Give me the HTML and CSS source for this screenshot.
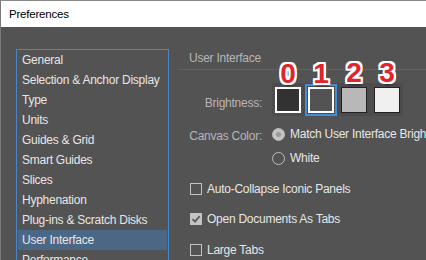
FILE: index.html
```html
<!DOCTYPE html>
<html lang="en">
<head>
  <meta charset="UTF-8">
  <title>Preferences</title>
  <link rel="stylesheet" href="styles.css">
</head>
<body>
  <div class="window">
    <div class="titlebar">Preferences</div>
    <div class="main">
      <ul class="sidebar">
        <li>General</li>
        <li>Selection &amp; Anchor Display</li>
        <li>Type</li>
        <li>Units</li>
        <li>Guides &amp; Grid</li>
        <li>Smart Guides</li>
        <li>Slices</li>
        <li>Hyphenation</li>
        <li>Plug-ins &amp; Scratch Disks</li>
        <li class="active">User Interface</li>
        <li>Performance</li>
      </ul>

      <div class="panel">
        <div class="panel-title">User Interface</div>

        <div class="row brightness-row">
          <div class="label">Brightness:</div>
          <div class="swatches">
            <div class="swatch swatch-0"><span class="num">0</span></div>
            <div class="swatch swatch-1 selected"><span class="num">1</span></div>
            <div class="swatch swatch-2"><span class="num">2</span></div>
            <div class="swatch swatch-3"><span class="num">3</span></div>
          </div>
        </div>

        <div class="row canvas-row">
          <div class="label">Canvas Color:</div>
          <div class="radios">
            <div class="option"><span class="radio checked"></span>Match User Interface Brightness</div>
            <div class="option"><span class="radio"></span>White</div>
          </div>
        </div>

        <div class="checks">
          <div class="option"><span class="checkbox"></span>Auto-Collapse Iconic Panels</div>
          <div class="option">
            <span class="checkbox checked">
              <svg width="10" height="10" viewBox="0 0 10 10"><path d="M1.5 5.2 L4 7.6 L8.6 2.2" fill="none" stroke="#5b5b5b" stroke-width="1.8"/></svg>
            </span>Open Documents As Tabs
          </div>
          <div class="option"><span class="checkbox"></span>Large Tabs</div>
        </div>
      </div>
    </div>
  </div>
</body>
</html>
```
FILE: styles.css
```css
* {
  margin: 0;
  padding: 0;
  box-sizing: border-box;
}

body {
  width: 426px;
  height: 260px;
  overflow: hidden;
  background-color: #535353;
  font-family: 'Liberation Sans', Arial, sans-serif;
  font-size: 12px;
  letter-spacing: -0.25px;
}

.window {
  height: 260px;
  border-top: 1px solid #8a8a8a;
  border-left: 1px solid #7a7a7a;
}

.titlebar {
  height: 26px;
  padding-left: 8px;
  display: flex;
  align-items: center;
  background-color: #fff;
  color: #000;
  font-size: 11.5px;
  letter-spacing: -0.2px;
}

.main {
  display: flex;
  padding: 22px 0 0 15px;
}

.sidebar {
  list-style: none;
  width: 153px;
  height: 240px;
  flex-shrink: 0;
  padding: 0 1px;
  border: 1px solid #4a86c5;
  color: #e6e6e6;
}

.sidebar li {
  height: 20px;
  line-height: 20px;
  padding-left: 4px;
  white-space: nowrap;
}

.sidebar li.active {
  background-color: #4b6786;
}

.panel {
  flex: 1;
  margin-left: 9px;
  white-space: nowrap;
}

.panel-title {
  padding: 1px 0 3px 11px;
  line-height: 16px;
  color: #b6b6b6;
  border-bottom: 1px solid #626262;
}

.row {
  display: flex;
  gap: 10px;
}

.label {
  width: 84px;
  flex-shrink: 0;
  text-align: right;
  line-height: 16px;
  color: #b6b6b6;
}

.brightness-row {
  margin-top: 13px;
}

.brightness-row .label {
  padding-top: 12px;
}

.swatches {
  display: flex;
  gap: 7px;
  padding: 4px 3px 3px;
  background-color: #4c4c4c;
}

.swatch {
  position: relative;
  width: 26px;
  height: 26px;
  border: 2px solid #fff;
}

.swatch-0 { background-color: #323232; }
.swatch-1 { background-color: #535353; }
.swatch-2 { background-color: #b8b8b8; border: 1px solid #222; }
.swatch-3 { background-color: #f0f0f0; border: 1px solid #222; }

.swatch.selected {
  outline: 2px solid #3f8fe0;
  outline-offset: 1px;
}

.num {
  position: absolute;
  left: -10px;
  right: -10px;
  top: -29px;
  text-align: center;
  font-size: 28px;
  font-weight: bold;
  line-height: 28px;
  letter-spacing: 0;
  color: #e3232b;
  text-shadow:
    2px 0 0 #fff, -2px 0 0 #fff, 0 2px 0 #fff, 0 -2px 0 #fff,
    2px 2px 0 #fff, -2px 2px 0 #fff, 2px -2px 0 #fff, -2px -2px 0 #fff,
    1px 3px 3px rgba(0, 0, 0, 0.5);
}

.canvas-row {
  margin-top: 10px;
}

.canvas-row .label {
  padding-top: 2px;
}

.radios {
  display: flex;
  flex-direction: column;
  gap: 8px;
}

.option {
  display: flex;
  align-items: center;
  line-height: 16px;
  color: #e6e6e6;
}

.radio {
  width: 13px;
  height: 13px;
  margin-right: 5px;
  border-radius: 50%;
  border: 1px solid #bdbdbd;
  display: flex;
  align-items: center;
  justify-content: center;
}

.radio.checked {
  background-color: #c4c4c4;
}

.radio.checked::after {
  content: '';
  width: 5px;
  height: 5px;
  border-radius: 50%;
  background-color: #9a9a9a;
}

.checks {
  display: flex;
  flex-direction: column;
  gap: 14.5px;
  margin-top: 14.5px;
  padding-left: 12px;
}

.checkbox {
  width: 12px;
  height: 12px;
  margin-right: 5px;
  border: 1px solid #c2c2c2;
  display: flex;
  align-items: center;
  justify-content: center;
}

.checkbox.checked {
  background-color: #c4c4c4;
}
```
